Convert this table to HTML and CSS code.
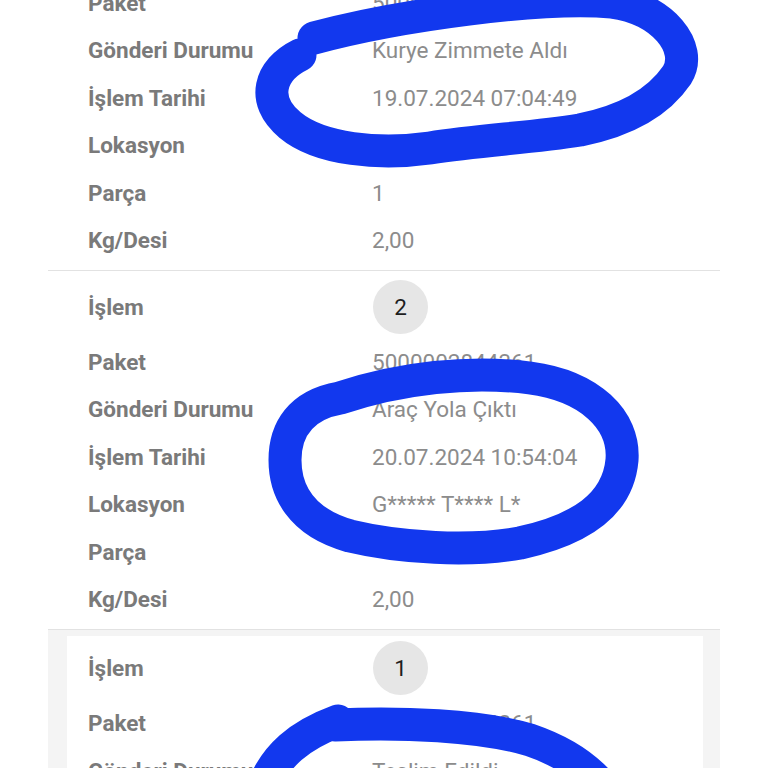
FILE: index.html
```html
<!DOCTYPE html>
<html lang="tr">
<head>
<meta charset="utf-8">
<link rel="stylesheet" href="styles.css">
</head>
<body>
<div class="page">
  <section class="group first">
    <div class="row"><span class="label">Paket</span><span class="value">5000002844361</span></div>
    <div class="row"><span class="label">Gönderi Durumu</span><span class="value">Kurye Zimmete Aldı</span></div>
    <div class="row"><span class="label">İşlem Tarihi</span><span class="value">19.07.2024 07:04:49</span></div>
    <div class="row"><span class="label">Lokasyon</span><span class="value">G***** T**** L*</span></div>
    <div class="row"><span class="label">Parça</span><span class="value">1</span></div>
    <div class="row"><span class="label">Kg/Desi</span><span class="value">2,00</span></div>
  </section>
  <section class="group">
    <div class="row step"><span class="label">İşlem</span><span class="value"><span class="badge">2</span></span></div>
    <div class="row"><span class="label">Paket</span><span class="value">5000002844361</span></div>
    <div class="row"><span class="label">Gönderi Durumu</span><span class="value">Araç Yola Çıktı</span></div>
    <div class="row"><span class="label">İşlem Tarihi</span><span class="value">20.07.2024 10:54:04</span></div>
    <div class="row"><span class="label">Lokasyon</span><span class="value">G***** T**** L*</span></div>
    <div class="row"><span class="label">Parça</span><span class="value"></span></div>
    <div class="row"><span class="label">Kg/Desi</span><span class="value">2,00</span></div>
  </section>
  <section class="group active">
    <div class="card">
      <div class="row step"><span class="label">İşlem</span><span class="value"><span class="badge">1</span></span></div>
      <div class="row"><span class="label">Paket</span><span class="value">5000002844361</span></div>
      <div class="row"><span class="label">Gönderi Durumu</span><span class="value">Teslim Edildi</span></div>
    </div>
  </section>
</div>
<svg class="scribbles" width="768" height="768" viewBox="0 0 768 768" aria-hidden="true">
  <path d="M314 38 C400 15 540 -4 612 2 C662 8 694 48 677 75 C660 100 630 120 580 130 C530 138 480 140 430 148 C380 155 320 150 290 125 C260 100 270 70 300 55"/>
  <path d="M340 398 C400 378 470 370 530 378 C590 386 625 420 622 460 C618 505 580 530 520 543 C470 552 400 548 350 536 C300 522 285 490 285 460 C285 430 300 405 340 398 Z"/>
  <path d="M338 721 C300 735 275 755 262 790 M335 725 C400 722 480 725 530 740 C565 752 590 770 605 790"/>
</svg>
</body>
</html>
```

FILE: styles.css
```css
html, body {
  margin: 0;
  padding: 0;
  background: #ffffff;
  overflow: hidden;
}

body {
  width: 768px;
  height: 768px;
  position: relative;
  font-family: Roboto, "Noto Sans", "Liberation Sans", sans-serif;
  font-size: 22.5px;
}

.page {
  margin: 0 48px;
}

.group {
  border-bottom: 1px solid #e2e2e2;
  padding: 5px 0 6.25px;
}

.group.first {
  margin-top: -21.25px;
  padding-top: 0;
}

.group.active {
  background: #f4f4f4;
  border-bottom: none;
  padding: 6px 17px 0 19px;
}

.card {
  background: #ffffff;
  padding-left: 21px;
}

.row {
  display: grid;
  grid-template-columns: 284px 1fr;
  align-items: center;
  height: 47.5px;
  padding-left: 40px;
}

.card .row {
  padding-left: 0;
}

.row.step {
  height: 62px;
}

.card .row.step {
  height: 63px;
}

.label {
  font-weight: 700;
  color: #7a7a7a;
}

.value {
  color: #8c8c8c;
  font-weight: 400;
}

.badge {
  display: inline-flex;
  align-items: center;
  justify-content: center;
  width: 55px;
  height: 54px;
  margin-left: 1px;
  border-radius: 50%;
  background: #e6e6e6;
  color: #1e1e1e;
}

.scribbles {
  position: absolute;
  top: 0;
  left: 0;
  pointer-events: none;
}

.scribbles path {
  fill: none;
  stroke: #1238ee;
  stroke-width: 33;
  stroke-linecap: round;
  stroke-linejoin: round;
}
```
